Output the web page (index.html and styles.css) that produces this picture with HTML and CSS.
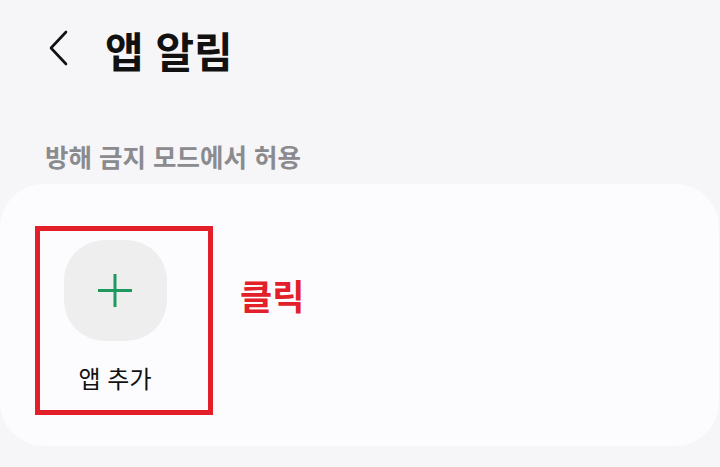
FILE: index.html
```html
<!DOCTYPE html>
<html lang="ko">
<head>
<meta charset="utf-8">
<link rel="stylesheet" href="styles.css">
</head>
<body>
<div class="screen">
  <header class="appbar">
    <svg class="back" width="22" height="38" viewBox="0 0 22 38"><path d="M18 3 L3 19 L18 35" fill="none" stroke="#111" stroke-width="2.6" stroke-linecap="round" stroke-linejoin="round"/></svg>
    <h1 class="title">앱 알림</h1>
  </header>
  <div class="section-label">방해 금지 모드에서 허용</div>
  <div class="card">
    <div class="add-box">
      <div class="squircle">
        <svg width="36" height="36" viewBox="0 0 36 36"><path d="M18 1 V34 M1 17.5 H35" stroke="#1e9a60" stroke-width="3"/></svg>
      </div>
      <div class="add-label">앱 추가</div>
    </div>
    <div class="click">클릭</div>
  </div>
</div>
</body>
</html>
```
FILE: styles.css
```css
html, body {
  margin: 0;
  padding: 0;
  background: #f6f6f8;
}
.screen {
  width: 720px;
  height: 467px;
  font-family: "Noto Sans CJK KR", "Noto Sans", sans-serif;
  overflow: hidden;
}
.appbar {
  display: flex;
  align-items: center;
  height: 100px;
  padding-left: 48px;
  box-sizing: border-box;
}
.back {
  display: block;
  margin-top: -4px;
}
.title {
  margin: 0 0 0 35px;
  font-size: 42px;
  font-weight: 700;
  color: #111;
  line-height: 1;
}
.section-label {
  margin: 43px 0 0 45px;
  font-size: 25.5px;
  font-weight: 700;
  color: #8b8b8f;
  line-height: 1;
  height: 41px;
}
.card {
  width: 719px;
  height: 262px;
  background: #fcfcfe;
  border-radius: 44px;
  display: flex;
  align-items: flex-start;
  box-sizing: border-box;
  padding: 42px 0 0 35px;
}
.add-box {
  width: 178px;
  height: 189px;
  box-sizing: border-box;
  border: 5px solid #e3202a;
  display: flex;
  flex-direction: column;
  align-items: center;
  padding: 9px 18px 0 0;
}
.squircle {
  width: 103px;
  height: 101px;
  background: #eeeeef;
  border-radius: 40%;
  display: flex;
  align-items: center;
  justify-content: center;
}
.add-label {
  margin-top: 25px;
  font-size: 24px;
  color: #111;
  line-height: 1;
}
.click {
  margin-left: 27px;
  margin-top: 51px;
  font-size: 35px;
  font-weight: 700;
  color: #e3202a;
  line-height: 1;
}
```
